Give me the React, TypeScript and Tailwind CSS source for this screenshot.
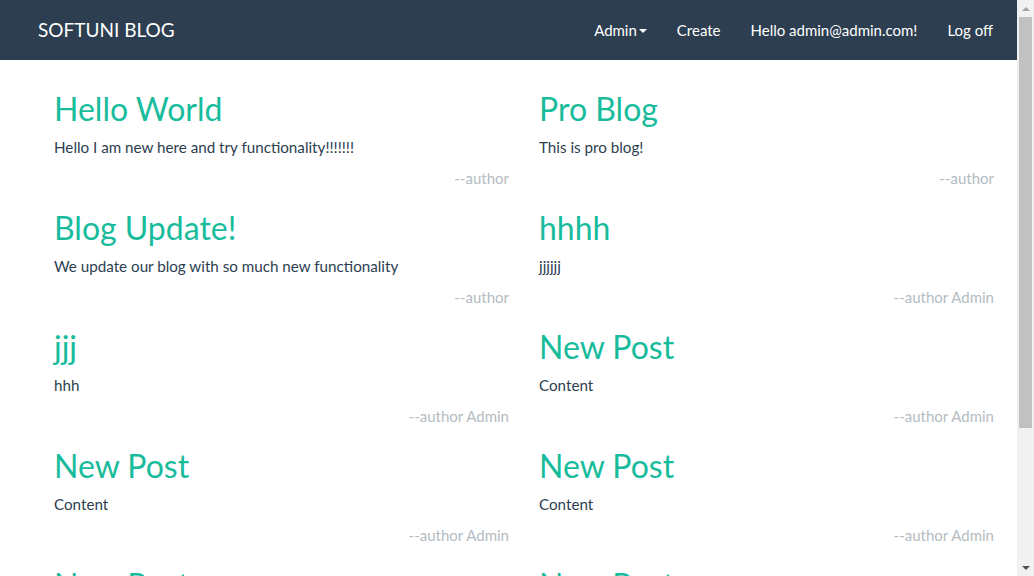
const posts = [
  { title: "Hello World", content: "Hello I am new here and try functionality!!!!!!!", author: "--author" },
  { title: "Pro Blog", content: "This is pro blog!", author: "--author" },
  { title: "Blog Update!", content: "We update our blog with so much new functionality", author: "--author" },
  { title: "hhhh", content: "jjjjjj", author: "--author Admin" },
  { title: "jjj", content: "hhh", author: "--author Admin" },
  { title: "New Post", content: "Content", author: "--author Admin" },
  { title: "New Post", content: "Content", author: "--author Admin" },
  { title: "New Post", content: "Content", author: "--author Admin" },
  { title: "New Post", content: "Content", author: "--author Admin" },
  { title: "New Post", content: "Content", author: "--author Admin" },
]

const NavLink = ({ children }: { children: React.ReactNode }) => (
  <a href="#" className="flex items-center px-[15px] text-[15px] text-white">
    {children}
  </a>
)

// page is taller than the window, so draw the classic scrollbar beside it
const Scrollbar = () => (
  <div className="flex w-[17px] shrink-0 flex-col bg-[#f1f1f1]">
    <div className="flex h-[17px] items-center justify-center">
      <span className="h-0 w-0 border-x-[4px] border-b-[4px] border-x-transparent border-b-[#a3a3a3]" />
    </div>
    <div className="mx-[2px] h-[411px] bg-[#c1c1c1]" />
    <div className="flex-1" />
    <div className="flex h-[17px] items-center justify-center">
      <span className="h-0 w-0 border-x-[4px] border-t-[4px] border-x-transparent border-t-[#505050]" />
    </div>
  </div>
)

export default function App() {
  return (
    <div className="flex h-[576px] overflow-hidden bg-white font-['Lato','Liberation_Sans',sans-serif] text-[#2c3e50]">
      <div className="w-[1017px] shrink-0">
        <nav className="flex h-[60px] items-center justify-between bg-[#2c3e50] pl-[38px] pr-[9px]">
          <a href="#" className="text-[19px] leading-[60px] text-white">SOFTUNI BLOG</a>
          <div className="flex h-full items-center">
            <NavLink>
              Admin
              <span className="ml-[2px] mt-[2px] inline-block h-0 w-0 border-x-[4px] border-t-[4px] border-x-transparent border-t-white" />
            </NavLink>
            <NavLink>Create</NavLink>
            <NavLink>Hello admin@admin.com!</NavLink>
            <NavLink>Log off</NavLink>
          </div>
        </nav>
        <main className="grid grid-cols-[485px_485px] pl-[39px] pt-[31px]">
          {posts.map((p, i) => (
            <article key={i} className="h-[119px] px-[15px]">
              <h2 className="h-[36px] text-[32px] leading-[36px] text-[#18bc9c]">{p.title}</h2>
              <p className="mt-[10px] text-[15.2px] leading-[21px]">{p.content}</p>
              <p className="mt-[10px] text-right text-[15px] leading-[21px] text-[#b4bcc2]">{p.author}</p>
            </article>
          ))}
        </main>
      </div>
      <Scrollbar />
    </div>
  )
}
